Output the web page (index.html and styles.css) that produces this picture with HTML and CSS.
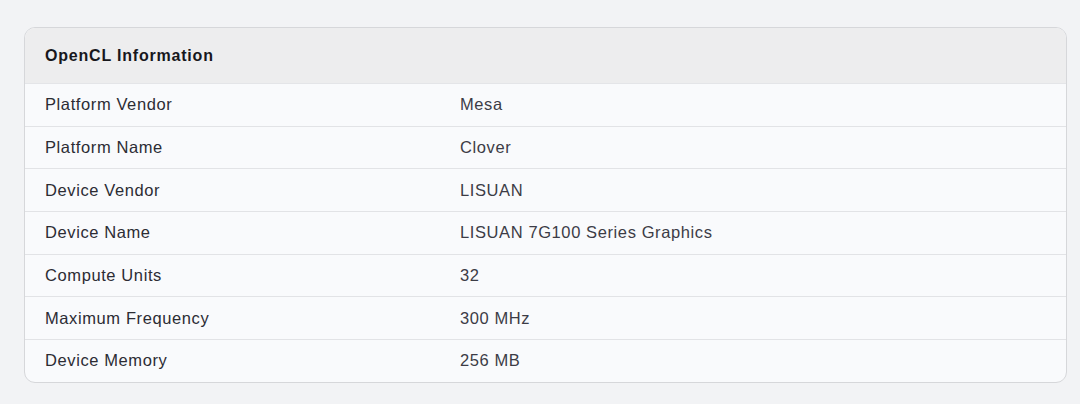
FILE: index.html
```html
<!DOCTYPE html>
<html>
<head>
<meta charset="utf-8">
<link rel="stylesheet" href="styles.css">
</head>
<body>
<div class="page">
  <section class="card">
    <div class="card-header">OpenCL Information</div>
    <div class="rows">
      <div class="row"><div class="label">Platform Vendor</div><div class="value">Mesa</div></div>
      <div class="row"><div class="label">Platform Name</div><div class="value">Clover</div></div>
      <div class="row"><div class="label">Device Vendor</div><div class="value">LISUAN</div></div>
      <div class="row"><div class="label">Device Name</div><div class="value">LISUAN 7G100 Series Graphics</div></div>
      <div class="row"><div class="label">Compute Units</div><div class="value">32</div></div>
      <div class="row"><div class="label">Maximum Frequency</div><div class="value">300 MHz</div></div>
      <div class="row"><div class="label">Device Memory</div><div class="value">256 MB</div></div>
    </div>
  </section>
</div>
</body>
</html>
```
FILE: styles.css
```css
html, body {
  margin: 0;
  padding: 0;
}
body {
  background: #f2f3f5;
  font-family: "Liberation Sans", Arial, sans-serif;
  color: #2e2e36;
}
.page {
  padding: 27px 13px 22px 24px;
}
.card {
  background: #f9fafc;
  border: 1px solid #d6d7da;
  border-radius: 11px;
  overflow: hidden;
}
.card-header {
  background: #ededee;
  height: 55px;
  display: flex;
  align-items: center;
  padding: 0 20px;
  font-weight: bold;
  font-size: 16px;
  letter-spacing: 0.8px;
  color: #17171c;
  border-bottom: 1px solid #e4e5e8;
}
.row {
  display: grid;
  grid-template-columns: 415px 1fr;
  height: 41.7px;
  align-items: center;
  border-bottom: 1px solid #e2e3e6;
  font-size: 16.5px;
  letter-spacing: 0.6px;
}
.row:last-child {
  border-bottom: none;
}
.label {
  padding-left: 20px;
  color: #2c2c34;
}
.value {
  padding-left: 20px;
  color: #3c3c46;
}
```
